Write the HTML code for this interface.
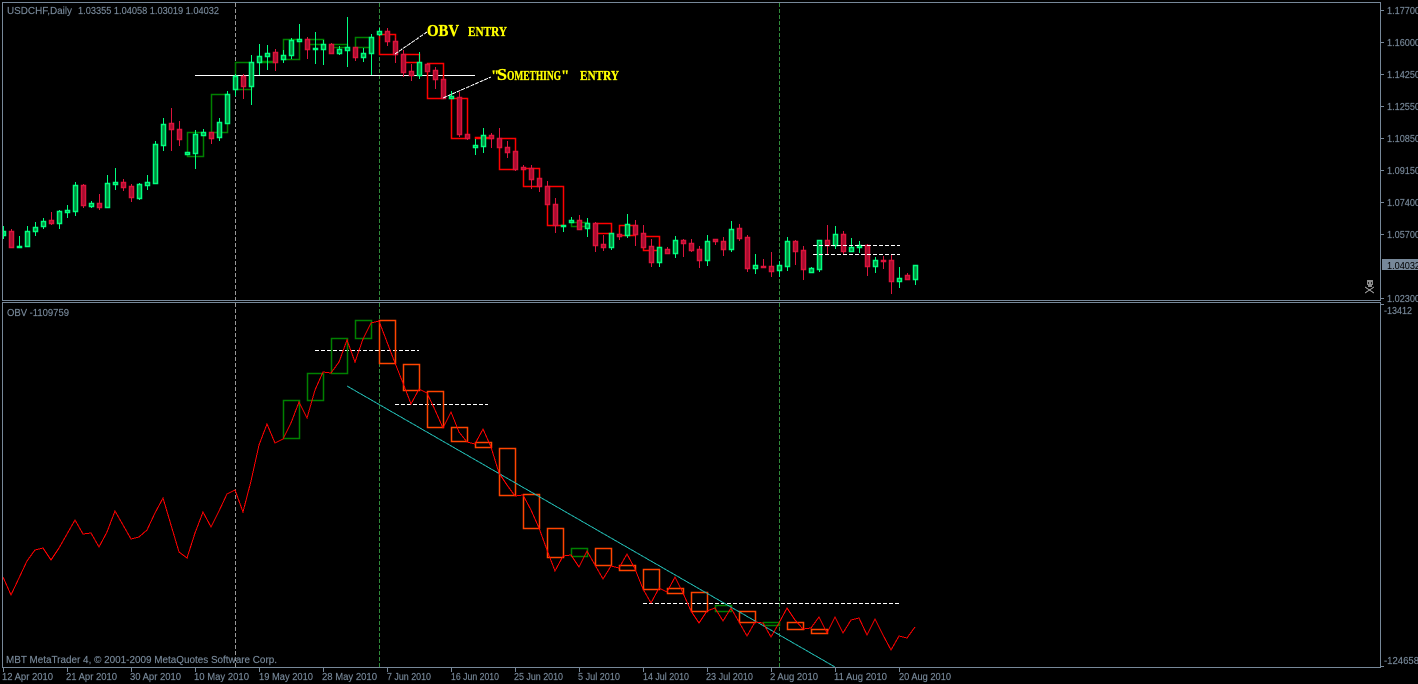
<!DOCTYPE html>
<html><head><meta charset="utf-8"><title>USDCHF Daily</title>
<style>
html,body{margin:0;padding:0;background:#000;width:1418px;height:684px;overflow:hidden}
svg{display:block}
text{font-family:"Liberation Sans",sans-serif;font-size:10px;fill:#778899;stroke:#778899;stroke-width:.15px}
.a{font-family:"Liberation Serif",serif;font-weight:bold;fill:#ffff00;stroke:#ffff00;stroke-width:.35px}
.b{shape-rendering:geometricPrecision;stroke-width:1.5px}
</style></head><body>
<svg width="1418" height="684" viewBox="0 0 1418 684" xmlns="http://www.w3.org/2000/svg">
<rect width="1418" height="684" fill="#000"/>
<g shape-rendering="crispEdges" fill="none">
<path d="M235.5 3V667" stroke="#999" stroke-dasharray="4 2"/>
<path d="M379.5 3V667M779.5 3V667" stroke="#2f8a3a" stroke-dasharray="4 2"/>
<path d="M195 75.5H475" stroke="#fff"/>
<path class="b" d="M187.5 132.5h16v24h-16zM211.5 94.5h16v38h-16zM235.5 62.5h16v27h-16zM259.5 61.5h16v1h-16zM283.5 39.5h16v20h-16zM307.5 39.5h16v5h-16zM331.5 44.5h16v3h-16zM355.5 37.5h16v10h-16zM571.5 222.5h16v4h-16z" stroke="#008000"/>
<path class="b" d="M379.5 34.5h16v20h-16zM403.5 54.5h16v8h-16zM427.5 63.5h16v35h-16zM451.5 98.5h16v40h-16zM475.5 137.5h16v1h-16zM499.5 138.5h16v31h-16zM523.5 168.5h16v18h-16zM547.5 186.5h16v39h-16zM595.5 223.5h16v10h-16zM619.5 225.5h16v10h-16zM643.5 236.5h16v14h-16z" stroke="#ff0000"/>
<path stroke="#00ff7f" d="M3.5 226V239M19.5 236V248M27.5 226V246M35.5 222V236M43.5 218V229M59.5 210V229M67.5 205V218M75.5 182V216M91.5 201V208M107.5 175V207M115.5 168V190M139.5 183V200M147.5 175V190M155.5 141V184M163.5 118V151M195.5 130V169M203.5 129V135M219.5 118V141M227.5 91V123M235.5 74V96M251.5 55V105M259.5 44V75M267.5 45V70M283.5 50V63M291.5 38V59M299.5 24V42M315.5 32V64M323.5 40V65M339.5 46V55M347.5 17V67M363.5 48V62M371.5 34V75M379.5 28V36M419.5 52V79M451.5 91V99M475.5 139V155M483.5 128V153M563.5 225V232M571.5 217V222M587.5 218V237M611.5 233V250M627.5 214V238M659.5 247V267M675.5 236V258M707.5 235V266M731.5 221V252M755.5 254V274M779.5 261V277M787.5 237V271M811.5 267V272M819.5 240V272M835.5 226V249M851.5 238V251M859.5 241V253M875.5 257V273M899.5 267V288M915.5 265V285"/>
<path stroke="#dc143c" d="M11.5 229V248M51.5 212V225M83.5 184V208M99.5 194V210M123.5 179V191M131.5 184V202M171.5 108V151M179.5 121V146M211.5 132V144M243.5 74V99M275.5 49V71M307.5 37V59M331.5 43V53M355.5 47V61M387.5 28V46M395.5 38V63M403.5 50V77M411.5 64V81M427.5 63V71M435.5 67V89M443.5 79V99M459.5 92V137M467.5 134V140M491.5 133V148M499.5 128V148M507.5 141V158M515.5 151V171M523.5 165V169M531.5 165V189M539.5 178V192M547.5 181V205M555.5 198V233M579.5 215V229M595.5 222V252M603.5 235V251M619.5 233V240M635.5 220V246M643.5 225V247M651.5 239V267M667.5 247V254M683.5 239V257M691.5 239V252M699.5 246V268M715.5 239V245M723.5 237V256M739.5 224V241M747.5 235V272M763.5 259V267M771.5 252V277M795.5 240V265M803.5 246V280M827.5 225V255M843.5 231V255M867.5 244V276M883.5 256V269M891.5 255V294M907.5 273V279"/>
<path class="b" stroke="#00ff7f" fill="#008a3c" d="M3.5 231.5h2V235.5h-2zM17.5 246.5h4V247.5h-4zM25.5 231.5h4V246.5h-4zM33.5 227.5h4V231.5h-4zM41.5 221.5h4V226.5h-4zM57.5 211.5h4V223.5h-4zM65.5 210.5h4V212.5h-4zM73.5 185.5h4V211.5h-4zM89.5 203.5h4V206.5h-4zM105.5 183.5h4V207.5h-4zM113.5 182.5h4V184.5h-4zM137.5 184.5h4V198.5h-4zM145.5 182.5h4V185.5h-4zM153.5 144.5h4V183.5h-4zM161.5 124.5h4V145.5h-4zM185.5 152.5h4V154.5h-4zM193.5 134.5h4V153.5h-4zM201.5 132.5h4V135.5h-4zM217.5 122.5h4V137.5h-4zM225.5 94.5h4V123.5h-4zM233.5 76.5h4V89.5h-4zM249.5 62.5h4V86.5h-4zM257.5 56.5h4V62.5h-4zM265.5 53.5h4V56.5h-4zM281.5 55.5h4V59.5h-4zM289.5 40.5h4V55.5h-4zM297.5 39.5h4V41.5h-4zM313.5 48.5h4V49.5h-4zM321.5 44.5h4V49.5h-4zM337.5 49.5h4V53.5h-4zM345.5 47.5h4V50.5h-4zM361.5 53.5h4V57.5h-4zM369.5 37.5h4V53.5h-4zM377.5 31.5h4V34.5h-4zM417.5 62.5h4V75.5h-4zM449.5 96.5h4V98.5h-4zM473.5 145.5h4V147.5h-4zM481.5 135.5h4V146.5h-4zM561.5 225.5h4V226.5h-4zM569.5 220.5h4V222.5h-4zM585.5 223.5h4V228.5h-4zM609.5 233.5h4V247.5h-4zM625.5 224.5h4V235.5h-4zM657.5 247.5h4V262.5h-4zM673.5 240.5h4V253.5h-4zM705.5 241.5h4V260.5h-4zM729.5 229.5h4V249.5h-4zM753.5 265.5h4V268.5h-4zM777.5 265.5h4V270.5h-4zM785.5 241.5h4V266.5h-4zM809.5 268.5h4V272.5h-4zM817.5 240.5h4V269.5h-4zM833.5 234.5h4V245.5h-4zM849.5 247.5h4V251.5h-4zM857.5 245.5h4V247.5h-4zM873.5 260.5h4V266.5h-4zM897.5 278.5h4V281.5h-4zM913.5 265.5h4V279.5h-4z"/>
<path class="b" stroke="#dc143c" fill="#a50d2f" d="M9.5 231.5h4V247.5h-4zM49.5 220.5h4V223.5h-4zM81.5 185.5h4V205.5h-4zM97.5 203.5h4V207.5h-4zM121.5 182.5h4V187.5h-4zM129.5 186.5h4V197.5h-4zM169.5 123.5h4V129.5h-4zM177.5 129.5h4V139.5h-4zM209.5 132.5h4V138.5h-4zM241.5 76.5h4V86.5h-4zM273.5 52.5h4V62.5h-4zM305.5 39.5h4V49.5h-4zM329.5 44.5h4V53.5h-4zM353.5 47.5h4V57.5h-4zM385.5 31.5h4V41.5h-4zM393.5 41.5h4V54.5h-4zM401.5 54.5h4V72.5h-4zM409.5 71.5h4V75.5h-4zM425.5 64.5h4V71.5h-4zM433.5 70.5h4V79.5h-4zM441.5 79.5h4V98.5h-4zM457.5 97.5h4V134.5h-4zM465.5 134.5h4V138.5h-4zM489.5 135.5h4V138.5h-4zM497.5 138.5h4V147.5h-4zM505.5 147.5h4V152.5h-4zM513.5 151.5h4V169.5h-4zM521.5 167.5h4V169.5h-4zM529.5 168.5h4V179.5h-4zM537.5 178.5h4V186.5h-4zM545.5 186.5h4V204.5h-4zM553.5 204.5h4V225.5h-4zM577.5 220.5h4V229.5h-4zM593.5 223.5h4V245.5h-4zM601.5 244.5h4V247.5h-4zM617.5 234.5h4V236.5h-4zM633.5 225.5h4V234.5h-4zM641.5 233.5h4V247.5h-4zM649.5 246.5h4V262.5h-4zM665.5 249.5h4V253.5h-4zM681.5 240.5h4V243.5h-4zM689.5 243.5h4V250.5h-4zM697.5 249.5h4V260.5h-4zM713.5 239.5h4V241.5h-4zM721.5 241.5h4V249.5h-4zM737.5 228.5h4V238.5h-4zM745.5 237.5h4V268.5h-4zM761.5 266.5h4V267.5h-4zM769.5 266.5h4V271.5h-4zM793.5 241.5h4V251.5h-4zM801.5 250.5h4V269.5h-4zM825.5 240.5h4V245.5h-4zM841.5 234.5h4V251.5h-4zM865.5 245.5h4V266.5h-4zM881.5 260.5h4V261.5h-4zM889.5 260.5h4V281.5h-4zM905.5 275.5h4V279.5h-4z"/>
<path d="M813 245.5H900M813 254.5H900M315 350.5H419M395 404.5H488M643 603.5H899" stroke="#fff" stroke-dasharray="4 2"/>
<path d="M395 54L427 32M443 98L491 77" stroke="#fff" stroke-dasharray="4 1"/>
<path class="b" d="M283.5 400.5h16v38h-16zM307.5 373.5h16v27h-16zM331.5 338.5h16v35h-16zM355.5 320.5h16v18h-16zM571.5 548.5h16v8h-16zM715.5 605.5h16v6h-16zM763.5 622.5h16v3h-16z" stroke="#008000"/>
<path class="b" d="M379.5 320.5h16v43h-16zM403.5 364.5h16v26h-16zM427.5 391.5h16v36h-16zM451.5 427.5h16v14h-16zM475.5 442.5h16v5h-16zM499.5 448.5h16v47h-16zM523.5 494.5h16v34h-16zM547.5 528.5h16v29h-16zM595.5 548.5h16v17h-16zM619.5 565.5h16v5h-16zM643.5 569.5h16v20h-16zM667.5 588.5h16v5h-16zM691.5 592.5h16v19h-16zM739.5 611.5h16v11h-16zM787.5 622.5h16v7h-16zM811.5 629.5h16v4h-16z" stroke="#ff4500"/>
<path d="M347 386L835 667" stroke="#20b2aa"/>
<polyline stroke="#ff0000" points="3,577 11,595 19,578 27,561 35,550 43,548 51,560 59,548 67,534 75,520 83,534 91,533 99,547 107,532 115,511 123,525 131,539 139,537 147,530 155,513 163,498 171,525 179,552 187,558 195,533 203,512 211,527 219,511 227,494 235,490 243,512 251,481 259,445 267,424 275,443 283,439 291,423 299,402 307,418 315,390 323,372 331,373 339,362 347,340 355,362 363,339 371,323 379,321 387,342 395,363 403,383 411,404 419,389 427,393 435,410 443,428 451,412 459,432 467,442 475,444 483,429 491,447 499,473 507,485 515,496 523,495 531,510 539,528 547,550 555,571 563,556 571,555 579,567 587,551 595,565 603,579 611,566 619,568 627,554 635,569 643,589 651,603 659,588 667,592 675,577 683,593 691,611 699,623 707,611 715,608 723,621 731,608 739,622 747,636 755,622 763,623 771,637 779,623 787,608 795,620 803,629 811,628 819,617 827,633 835,617 843,633 851,620 859,618 867,635 875,619 883,635 891,650 899,636 907,638 915,627"/>
<path stroke="#778899" d="M2 2.5H1381M2.5 2V301M1380.5 2V301M2 300.5H1381M2 302.5H1381M2.5 302V668M1380.5 302V668M2 667.5H1381"/>
<path stroke="#778899" d="M1381 10.5h3M1381 42.5h3M1381 74.5h3M1381 106.5h3M1381 138.5h3M1381 170.5h3M1381 202.5h3M1381 234.5h3M1381 298.5h3M1381 304.5h3M1381 666.5h3M3.5 668v4M67.5 668v4M131.5 668v4M195.5 668v4M259.5 668v4M323.5 668v4M387.5 668v4M451.5 668v4M515.5 668v4M579.5 668v4M643.5 668v4M707.5 668v4M771.5 668v4M835.5 668v4M899.5 668v4"/>
<rect x="1382" y="259" width="36" height="11" fill="#778899" stroke="none"/>
<g stroke="none" fill="#8c8c8c">
<rect x="1367" y="280" width="6" height="5"/><rect x="1368" y="285" width="4" height="2"/>
<rect x="1368" y="282" width="1" height="2" fill="#222"/><rect x="1371" y="282" width="1" height="2" fill="#222"/>
</g>
<path d="M1365 287L1374 293M1374 287L1365 293" stroke="#8c8c8c"/>
</g>
<text x="7" y="14" textLength="65" lengthAdjust="spacingAndGlyphs">USDCHF,Daily</text>
<text x="78" y="14" textLength="141" lengthAdjust="spacingAndGlyphs">1.03355 1.04058 1.03019 1.04032</text>
<text x="7" y="316" textLength="62" lengthAdjust="spacingAndGlyphs">OBV -1109759</text>
<text x="6" y="663" textLength="271" lengthAdjust="spacingAndGlyphs">MBT MetaTrader 4, © 2001-2009 MetaQuotes Software Corp.</text>
<text x="1387" y="14" textLength="33" lengthAdjust="spacingAndGlyphs">1.17700</text>
<text x="1387" y="46" textLength="33" lengthAdjust="spacingAndGlyphs">1.16000</text>
<text x="1387" y="78" textLength="33" lengthAdjust="spacingAndGlyphs">1.14250</text>
<text x="1387" y="110" textLength="33" lengthAdjust="spacingAndGlyphs">1.12550</text>
<text x="1387" y="142" textLength="33" lengthAdjust="spacingAndGlyphs">1.10850</text>
<text x="1387" y="174" textLength="33" lengthAdjust="spacingAndGlyphs">1.09150</text>
<text x="1387" y="206" textLength="33" lengthAdjust="spacingAndGlyphs">1.07400</text>
<text x="1387" y="238" textLength="33" lengthAdjust="spacingAndGlyphs">1.05700</text>
<text x="1387" y="269" textLength="33" lengthAdjust="spacingAndGlyphs" style="fill:#000;stroke:none">1.04032</text>
<text x="1387" y="302" textLength="33" lengthAdjust="spacingAndGlyphs">1.02300</text>
<text x="1384" y="314" textLength="28" lengthAdjust="spacingAndGlyphs">-13412</text>
<text x="1384" y="664" textLength="35" lengthAdjust="spacingAndGlyphs">-124658</text>
<text x="2" y="680" textLength="51" lengthAdjust="spacingAndGlyphs">12 Apr 2010</text>
<text x="66" y="680" textLength="51" lengthAdjust="spacingAndGlyphs">21 Apr 2010</text>
<text x="130" y="680" textLength="51" lengthAdjust="spacingAndGlyphs">30 Apr 2010</text>
<text x="194" y="680" textLength="55" lengthAdjust="spacingAndGlyphs">10 May 2010</text>
<text x="259" y="680" textLength="54" lengthAdjust="spacingAndGlyphs">19 May 2010</text>
<text x="322" y="680" textLength="55" lengthAdjust="spacingAndGlyphs">28 May 2010</text>
<text x="387" y="680" textLength="44" lengthAdjust="spacingAndGlyphs">7 Jun 2010</text>
<text x="451" y="680" textLength="48" lengthAdjust="spacingAndGlyphs">16 Jun 2010</text>
<text x="514" y="680" textLength="49" lengthAdjust="spacingAndGlyphs">25 Jun 2010</text>
<text x="578" y="680" textLength="42" lengthAdjust="spacingAndGlyphs">5 Jul 2010</text>
<text x="643" y="680" textLength="46" lengthAdjust="spacingAndGlyphs">14 Jul 2010</text>
<text x="706" y="680" textLength="47" lengthAdjust="spacingAndGlyphs">23 Jul 2010</text>
<text x="770" y="680" textLength="48" lengthAdjust="spacingAndGlyphs">2 Aug 2010</text>
<text x="834" y="680" textLength="53" lengthAdjust="spacingAndGlyphs">11 Aug 2010</text>
<text x="899" y="680" textLength="52" lengthAdjust="spacingAndGlyphs">20 Aug 2010</text>
<text class="a" x="427" y="36" style="font-size:17px" textLength="32" lengthAdjust="spacingAndGlyphs">OBV</text>
<text class="a" x="468" y="36" style="font-size:13.5px" textLength="39" lengthAdjust="spacingAndGlyphs">ENTRY</text>
<text class="a" x="491" y="80" style="font-size:15px">"</text>
<text class="a" x="497" y="80" style="font-size:17px" textLength="10" lengthAdjust="spacingAndGlyphs">S</text>
<text class="a" x="507" y="80" style="font-size:13.5px" textLength="54" lengthAdjust="spacingAndGlyphs">OMETHING</text>
<text class="a" x="561" y="80" style="font-size:15px">"</text>
<text class="a" x="580" y="80" style="font-size:13.5px" textLength="39" lengthAdjust="spacingAndGlyphs">ENTRY</text>
</svg>
</body></html>
